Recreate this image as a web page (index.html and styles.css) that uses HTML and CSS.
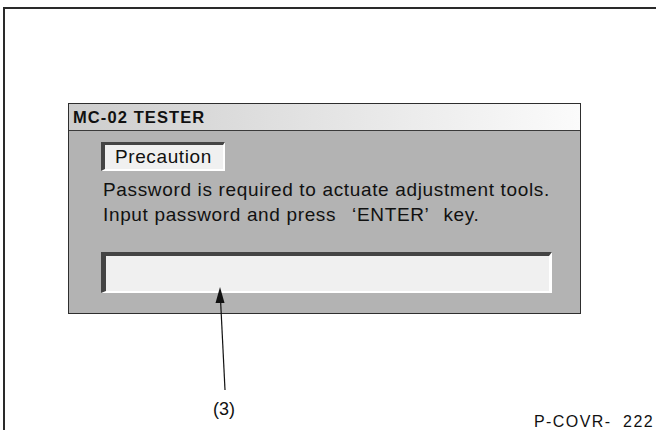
FILE: index.html
```html
<!DOCTYPE html>
<html lang="en">
<head>
    <meta charset="UTF-8">
    <meta name="viewport" content="width=device-width, initial-scale=1.0">
    <title>MC-02 Tester</title>
    <link rel="stylesheet" href="styles.css">
</head>
<body>

    <div class="sheet">
        <div class="dialog">
            <div class="dialog-title">MC-02 TESTER</div>
            <div class="dialog-body">
                <div class="tag">Precaution</div>
                <p class="message">
                    Password is required to actuate adjustment tools.<br>
                    Input password and press <span class="q">‘ENTER’</span> key.
                </p>
                <div class="field"></div>
            </div>
        </div>

        <div class="footer">
            <div class="callout">(3)</div>
            <div class="ref">P-COVR- &nbsp;222</div>
        </div>

        <!-- leader line from label (3) to the password field -->
        <svg class="leader" width="40" height="110" viewBox="0 0 40 110">
            <line x1="12" y1="103" x2="7.5" y2="12" stroke="#111" stroke-width="1.2"/>
            <polygon points="7,0 2.5,16 11.5,16" fill="#111"/>
        </svg>
    </div>

</body>
</html>
```

FILE: styles.css
```css
body {
    margin: 0;
    background: #fff;
    font-family: 'Liberation Sans', Arial, sans-serif;
    color: #111;
    overflow: hidden;
}

.sheet {
    position: relative;
    margin: 7px 0 0 3px;
    height: 440px;
    border-top: 2px solid #2a2a2a;
    border-left: 2px solid #2a2a2a;
}

.dialog {
    margin: 94px 0 0 63px;
    width: 511px;
    border: 1px solid #2e2e2e;
    background: #b3b3b3;
}

.dialog-title {
    height: 26px;
    line-height: 27px;
    padding-left: 4px;
    font-size: 16.5px;
    font-weight: bold;
    letter-spacing: 1.1px;
    background: linear-gradient(to right, #cdcdcd, #fbfbfb);
    border-bottom: 1px solid #3a3a3a;
}

.dialog-body {
    padding: 11px 0 20px 32px;
}

.tag {
    display: inline-block;
    width: 108px;
    height: 24px;
    padding-left: 10px;
    line-height: 24px;
    font-size: 19px;
    letter-spacing: 0.6px;
    background: #f0f0f0;
    border-top: 3px solid #444;
    border-left: 4px solid #444;
    border-right: 2px solid #fff;
    border-bottom: 2px solid #fff;
}

.message {
    margin: 6px 0 0 2px;
    font-size: 19px;
    line-height: 25px;
    letter-spacing: 0.65px;
}

/* the quotes are full-width in the original, so they sit apart from the words */
.q {
    margin: 0 8px 0 10px;
}

.field {
    margin-top: 25px;
    width: 443px;
    height: 35px;
    background: #f0f0f0;
    border-top: 4px solid #444;
    border-left: 5px solid #444;
    border-right: 3px solid #fff;
    border-bottom: 2px solid #fff;
}

.footer {
    display: flex;
    margin-top: 85px;
}

.callout {
    margin-left: 208px;
    font-size: 18px;
}

.ref {
    margin: 14px 2px 0 auto;
    font-size: 16px;
    letter-spacing: 1.4px;
}

.leader {
    position: absolute;
    left: 208px;
    top: 278px;
}
```
